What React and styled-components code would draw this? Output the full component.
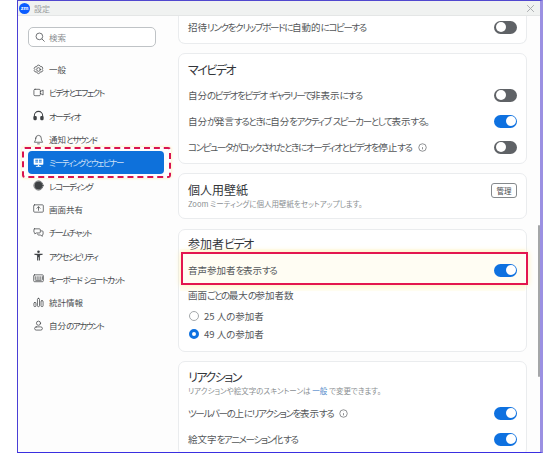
import React from "react";
import styled, { createGlobalStyle } from "styled-components";

const Global = createGlobalStyle`
  html, body { margin: 0; padding: 0; background: #fff; }
  body { font-family: "Noto Sans CJK JP", "Noto Sans", sans-serif; font-feature-settings: "palt"; }
  * { box-sizing: border-box; }
`;
const Page = styled.div`width: 550px; height: 453px; padding-left: 17px; overflow: hidden; background: #fff;`;
const Window = styled.div`
  width: 526px; height: 453px; display: flex; flex-direction: column; overflow: hidden;
  border-style: solid; border-color: #5148cf #9b90e2 #3a2fe0 #4a3fd6; border-width: 1px 3px 1px 1px; background: #fdfdfd;
`;
const TitleBar = styled.div`
  height: 15px; flex: none; display: flex; align-items: center; gap: 3px; padding: 0 5px 0 1px;
  background: #f0f2f1; border-bottom: 1px solid #e4e6e6; color: #9a9d9f; font-size: 8px;
`;
const Logo = styled.div`
  width: 11px; height: 11px; border-radius: 50%; background: #0b5cff; color: #fff; font: 700 5.5px/11px "Liberation Sans", sans-serif; text-align: center;
`;
const TitleText = styled.span`flex: 1; margin-left: 1px;`;
const Body = styled.div`flex: 1; min-height: 0; display: flex;`;
const Sidebar = styled.nav`width: 152px; flex: none; padding: 11px 0 0 10px; display: flex; flex-direction: column;`;
const Search = styled.div`
  width: 128px; height: 20px; border: 1px solid #bfc3c6; border-radius: 5px; display: flex; align-items: center; gap: 4px; padding-left: 6px;
  color: #8a8e91; font-size: 8.5px; margin-bottom: 10.5px; background: #fff;
`;
const NavItem = styled.div`
  position: relative; width: 136px; height: 23.3px; display: flex; align-items: center; gap: 5px; padding-left: 5px; font-size: 8.5px; color: ${p => p.$active ? "#cfe0f7" : "#4a4d50"};
  background: ${p => p.$active ? "#0e71db" : "transparent"}; border-radius: 4px;
  svg { width: 11px; height: 11px; flex: none; }
`;
const DashedMark = styled.div`
  position: absolute; left: -6.5px; top: -3.5px; width: 149px; height: 31px; border: 2px dashed #d9134f; border-radius: 3px; box-shadow: 0 0 3px #ffe9a0; pointer-events: none;
`;
const Content = styled.main`flex: 1; min-width: 0; padding: 0 12px 0 8px; display: flex; flex-direction: column; gap: 9px; overflow: hidden;`;
const Card = styled.section`
  position: relative; flex: none; width: 349px; background: #fff; border: 1px solid #eaecee; border-radius: 7px;
  padding: ${p => p.$pad || "8px 9px 3px"}; margin-top: ${p => p.$mt || 0};
  ${p => p.$cut && "border-top: 0; border-radius: 0 0 7px 7px;"}
`;
const Heading = styled.h2`margin: 0; font-weight: 400; font-size: 12px; line-height: 16px; color: #33363a; margin-bottom: ${p => p.$mb || 0};`;
const Row = styled.div`
  height: 26px; display: flex; align-items: center; justify-content: space-between; font-size: 9.5px; color: #54575a;
  margin-top: ${p => p.$mt || 0}; ${p => p.$tint && "background: #fffdf3; box-shadow: 0 0 0 8px #fffdf3;"}
`;
const RowLabel = styled.span`display: flex; align-items: center; gap: 6px;`;
const Kana = styled.span`letter-spacing: ${p => p.$k};`;
const Track = styled.div`
  width: 23px; height: 13px; border-radius: 7px; padding: 1.5px; display: flex; justify-content: ${p => p.$on ? "flex-end" : "flex-start"}; background: ${p => p.$on ? "#0e71e0" : "#5f6266"};
`;
const Knob = styled.div`width: 10px; height: 10px; border-radius: 50%; background: #fff;`;
const Sub = styled.div`font-size: 7.5px; line-height: 12px; color: #8b8f92;`;
const SubLink = styled.span`color: #4a86c8;`;
const SpreadHead = styled.div`display: flex; justify-content: space-between; align-items: flex-start;`;
const ManageButton = styled.div`
  width: 26px; height: 15px; border: 1px solid #85898c; border-radius: 3px; font-size: 7.5px; line-height: 13px; text-align: center; color: #4a4d50; margin-top: 1px;
`;
const Plain = styled.div`font-size: 9.5px; line-height: 16px; color: #54575a; margin: 4px 0 4px;`;
const RadioRow = styled.div`height: 18px; display: flex; align-items: center; gap: 5px; font-size: 9.5px; color: #54575a;`;
const Radio = styled.div`
  width: 10px; height: 10px; border-radius: 50%; margin-left: 1px; background: #fff; border: ${p => p.$on ? "3px solid #0e71e0" : "1px solid #a4a8ab"};
`;
const Highlight = styled.div`
  position: absolute; left: 2px; top: 22px; width: 347px; height: 33px; border: 2px solid #e3164f; pointer-events: none; box-shadow: 0 0 6px #ffeeb0;
`;
const Scroll = styled.div`position: relative; width: 2px; flex: none; margin-left: -2px;`;
const Thumb = styled.div`position: absolute; left: 0; top: 209px; width: 2px; height: 152px; background: #a4a6a8; border-radius: 1px;`;

const Jp = ({ k = "-1.35px", children }) => (
  <span>
    {children.split(/([ぁ-ゖァ-ヶー]+)/).map((part, i) => (i % 2 ? <Kana key={i} $k={k}>{part}</Kana> : part))}
  </span>
);

const S = { fill: "none", stroke: "currentColor", strokeWidth: 1.6, strokeLinecap: "round", strokeLinejoin: "round", viewBox: "0 0 24 24" };
const dark = "#3f4245";
const Icons = {
  gear: <svg {...S} color={dark}><path d="M12 2.5l3 1 1.5 2.5 3-.3 2 3.4-1.7 2.4 1.7 2.400-2 3.400-3-.3L15 19.500l-3 1.500-3-1.500-1.500-2.500-3 .3-2-3.400L4.200 12 2.500 9.600l2-3.400 3 .3L9 4z"/><circle cx="12" cy="12" r="4"/></svg>,
  video: <svg {...S} color={dark}><rect x="2" y="5" width="14" height="14" rx="2.500"/><path d="M16 10l6-3.500v11L16 14"/></svg>,
  phones: <svg {...S} color={dark} strokeWidth="2.2"><path d="M3 16v-4a9 9 0 0 1 18 0v4"/><rect x="2" y="14" width="5" height="7" rx="1.500" fill="currentColor"/><rect x="17" y="14" width="5" height="7" rx="1.500" fill="currentColor"/></svg>,
  bell: <svg {...S} color={dark}><path d="M6 9a6 6 0 0 1 12 0c0 6 3 8 3 9H3c0-1 3-3 3-9z"/><path d="M10 21.500h4"/></svg>,
  meet: <svg viewBox="0 0 24 24" fill="#fff"><path fillRule="evenodd" d="M3 3h18a1.500 1.500 0 0 1 1.500 1.500v11A1.500 1.500 0 0 1 21 17H3a1.500 1.500 0 0 1-1.500-1.500v-11A1.500 1.500 0 0 1 3 3zm2 3v2h6V6zm8 0v2h6V6zM5 10v2h6v-2zm8 0v2h6v-2z"/><rect x="10.500" y="17" width="3" height="3"/><rect x="6" y="19.500" width="12" height="2" rx="1"/></svg>,
  rec: <svg {...S} color={dark}><circle cx="12" cy="12" r="10"/><circle cx="12" cy="12" r="8" fill="currentColor"/></svg>,
  share: <svg {...S} color={dark}><rect x="1.500" y="4" width="21" height="16" rx="2"/><path d="M12 16V8.500M8.500 11.500L12 8l3.500 3.500"/></svg>,
  chat: <svg {...S} color={dark}><path d="M3 4h11a2 2 0 0 1 2 2v5a2 2 0 0 1-2 2H7l-3 2v-2a3 3 0 0 1-2-2V6a2 2 0 0 1 1-2z"/><path d="M18 8.500h2a2 2 0 0 1 2 2v5a2 2 0 0 1-2 2v3l-3-3h-5a2 2 0 0 1-2-2"/></svg>,
  access: <svg viewBox="0 0 24 24" fill={dark}><circle cx="12" cy="4" r="2.800"/><path d="M3 8h18v2.500l-6 1V23h-2.300v-7h-1.400v7H9V11.500l-6-1z"/></svg>,
  keyboard: <svg {...S} color={dark}><rect x="1.500" y="4" width="21" height="15" rx="2"/><path d="M5 8v6M9 8v6M13 8v6M17 8v6M21 8v6M6 16h12"/></svg>,
  stats: <svg {...S} color={dark}><rect x="2" y="12" width="4.500" height="9" rx="2"/><rect x="9.700" y="3" width="4.500" height="18" rx="2"/><rect x="17.500" y="8" width="4.500" height="13" rx="2"/></svg>,
  user: <svg {...S} color={dark}><circle cx="12" cy="7" r="4.500"/><rect x="3.500" y="15" width="17" height="7" rx="3.500"/></svg>,
};
const SearchIcon = () => <svg width="10" height="10" viewBox="0 0 24 24" fill="none" stroke="#55585b" strokeWidth="2"><circle cx="10.500" cy="10.500" r="8"/><path d="M16.500 16.500L23 23"/></svg>;
const InfoIcon = () => <svg width="9" height="9" viewBox="0 0 24 24" fill="none" stroke="#6b6e71" strokeWidth="2"><circle cx="12" cy="12" r="10"/><path d="M12 11v6M12 7v.5"/></svg>;
const CloseIcon = () => <svg width="9" height="9" viewBox="0 0 24 24" fill="none" stroke="#a6a9ab" strokeWidth="2.500"><path d="M3 3l18 18M21 3L3 21"/></svg>;

const nav = [
  ["gear", "一般"], ["video", "ビデオとエフェクト"], ["phones", "オーディオ"], ["bell", "通知とサウンド"],
  ["meet", "ミーティングとウェビナー", true], ["rec", "レコーディング"], ["share", "画面共有"], ["chat", "チームチャット"],
  ["access", "アクセシビリティ"], ["keyboard", "キーボード ショートカット"], ["stats", "統計情報"], ["user", "自分のアカウント"],
];
const Toggle = ({ on }) => <Track $on={on}><Knob /></Track>;

export default function App() {
  return (
    <Page>
      <Global />
      <Window>
        <TitleBar>
          <Logo>zm</Logo>
          <TitleText>設定</TitleText>
          <CloseIcon />
        </TitleBar>
        <Body>
          <Sidebar>
            <Search><SearchIcon />検索</Search>
            {nav.map(([icon, label, active]) => (
              <NavItem key={label} $active={active}>
                {Icons[icon]}<Jp k="-1.4px">{label}</Jp>
                {active && <DashedMark />}
              </NavItem>
            ))}
          </Sidebar>
          <Content>
            <Card $cut $pad="0 9px 3px" $mt="-2px">
              <Row><Jp>招待リンクをクリップボードに自動的にコピーする</Jp><Toggle /></Row>
            </Card>
            <Card>
              <Heading $mb="4px"><Jp k="-1.5px">マイビデオ</Jp></Heading>
              <Row><Jp>自分のビデオをビデオ ギャラリーで非表示にする</Jp><Toggle /></Row>
              <Row><Jp>自分が発言するときに自分をアクティブ スピーカーとして表示する。</Jp><Toggle on /></Row>
              <Row><RowLabel><Jp>コンピュータがロックされたときにオーディオとビデオを停止する</Jp><InfoIcon /></RowLabel><Toggle /></Row>
            </Card>
            <Card $pad="8px 9px 8px">
              <SpreadHead>
                <div>
                  <Heading>個人用壁紙</Heading>
                  <Sub>Zoom ミーティングに個人用壁紙をセットアップします。</Sub>
                </div>
                <ManageButton>管理</ManageButton>
              </SpreadHead>
            </Card>
            <Card $pad="6px 9px 8px" $mt="1px">
              <Heading $mb="5px"><Jp k="-1.5px">参加者ビデオ</Jp></Heading>
              <Row $tint><Jp>音声参加者を表示する</Jp><Toggle on /></Row>
              <Plain><Jp>画面ごとの最大の参加者数</Jp></Plain>
              <RadioRow><Radio />25 人の参加者</RadioRow>
              <RadioRow><Radio $on />49 人の参加者</RadioRow>
              <Highlight />
            </Card>
            <Card $pad="7px 9px 3px">
              <Heading><Jp k="-1.5px">リアクション</Jp></Heading>
              <Sub>リアクションや絵文字のスキントーンは <SubLink>一般</SubLink> で変更できます。</Sub>
              <Row $mt="3px"><RowLabel><Jp>ツールバーの上にリアクションを表示する</Jp><InfoIcon /></RowLabel><Toggle on /></Row>
              <Row><Jp>絵文字をアニメーション化する</Jp><Toggle on /></Row>
            </Card>
          </Content>
          <Scroll><Thumb /></Scroll>
        </Body>
      </Window>
    </Page>
  );
}
